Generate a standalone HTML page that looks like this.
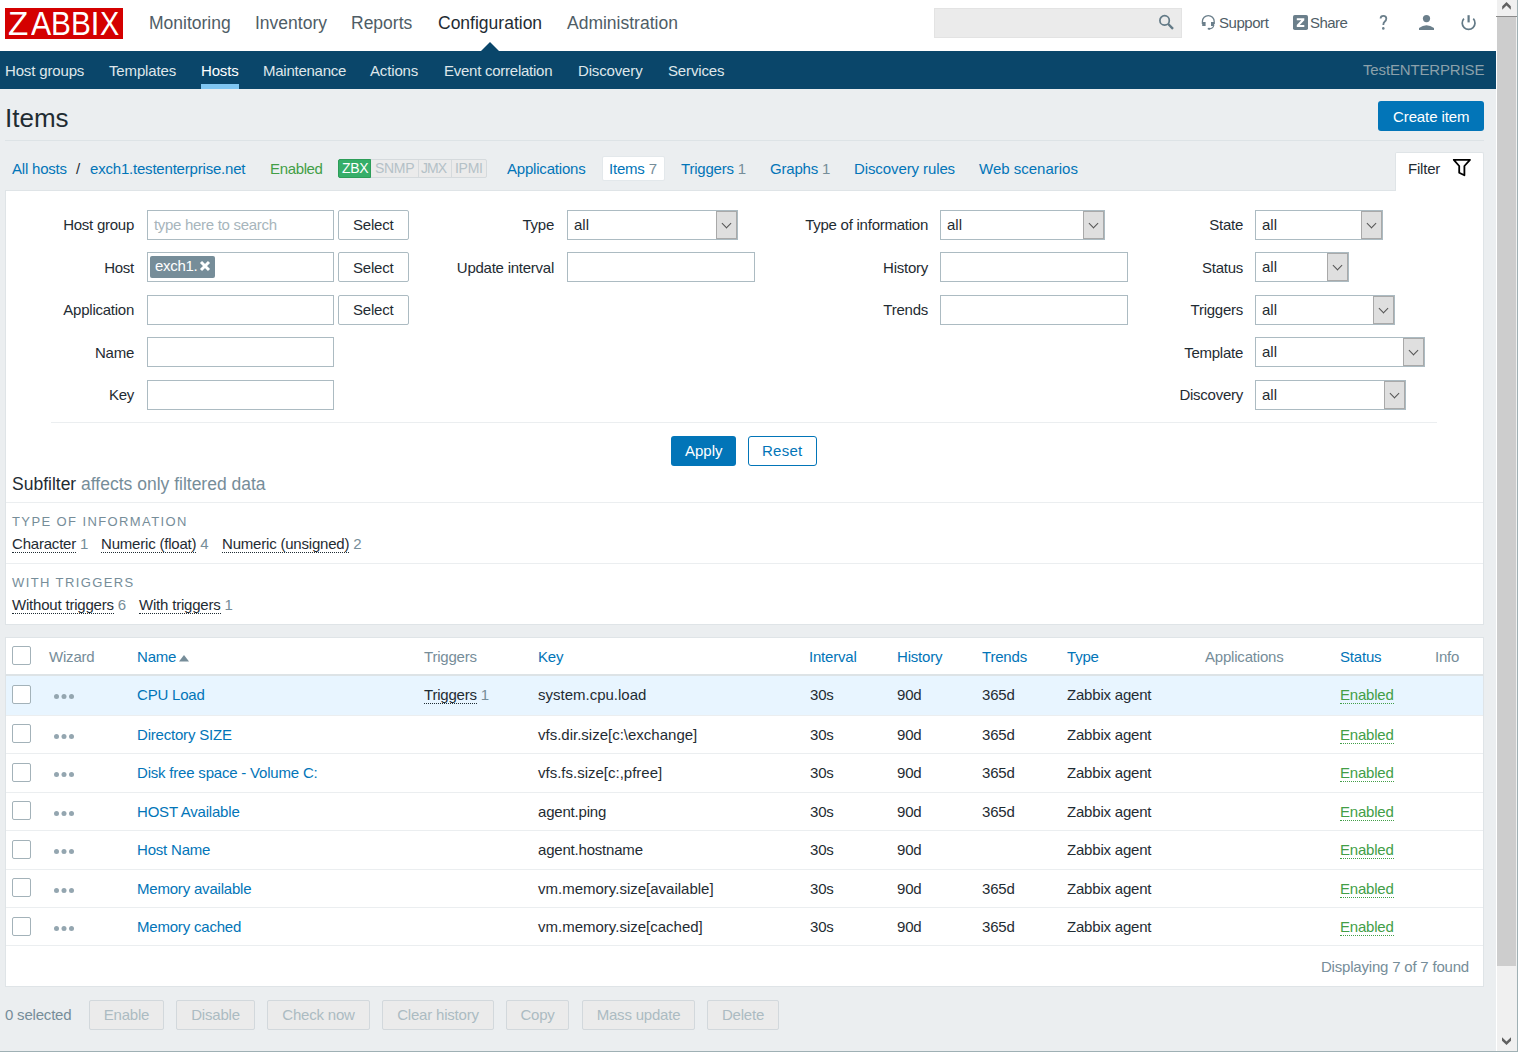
<!DOCTYPE html>
<html><head><meta charset="utf-8">
<style>
*{box-sizing:border-box;margin:0;padding:0}
html,body{width:1527px;height:1058px;overflow:hidden;background:#fff}
body{font-family:"Liberation Sans",sans-serif;color:#1f2c33;position:relative}
.a{position:absolute;white-space:nowrap;line-height:1}
#vp{position:absolute;left:0;top:0;width:1518px;height:1052px;border-right:1px solid #9fb0b4;border-bottom:1px solid #9fb0b4;background:#ebeef0;overflow:hidden}
#hdr{position:absolute;left:0;top:0;width:1496px;height:51px;background:#fff}
#logo{position:absolute;left:5px;top:8px;width:118px;height:31px;background:#d40000}
.mn{font-size:17.5px;color:#4f5d66;top:15px}
#sub{position:absolute;left:0;top:51px;width:1496px;height:38px;background:#0a466a}
.sn{font-size:15px;color:#dfe6ea;top:12px;letter-spacing:-0.15px}
.f15{font-size:15px;letter-spacing:-0.2px}
.lnk{color:#0275b8}
.gr{color:#768d99}
.grn{color:#429e47}
.box{position:absolute;background:#fff;border:1px solid #dfe4e7}
.inp{position:absolute;height:30px;border:1px solid #acbbc2;background:#fff}
.btn{position:absolute;height:30px;border:1px solid #acbbc2;border-radius:2px;background:#fff}
.lbl{font-size:15px;letter-spacing:-0.25px;text-align:right}
.sel{position:absolute;height:30px;border:1px solid #acbbc2;background:#fff}
.sel i{position:absolute;right:0;top:0;width:21px;height:28px;border:1px solid #a9a9a9;background:#dfdfdf}
.sel i:after{content:"";position:absolute;left:6px;top:8px;width:6px;height:6px;border-right:1.3px solid #555;border-bottom:1.3px solid #555;transform:rotate(45deg)}
.sel b{position:absolute;left:6px;top:6px;font-weight:normal;font-size:15px;line-height:1}
.dot{border-bottom:1px dotted currentColor}
.cb{position:absolute;left:12px;width:19px;height:19px;border:1px solid #a3b2b9;border-radius:2px;background:#fff}
.wz{position:absolute;left:53px;width:21px;height:6px}
.wz:before{content:"";position:absolute;left:1px;top:0;width:5px;height:5px;border-radius:50%;background:#94a6b0;box-shadow:7.5px 0 0 #94a6b0,15px 0 0 #94a6b0}
.dbtn{position:absolute;top:1000px;height:30px;border:1px solid #d2d8dc;border-radius:2px;background:#ebebeb;color:#acbbc2;font-size:15px;letter-spacing:-0.2px;text-align:center;line-height:28px}
</style></head><body>
<div id="vp">
 <!-- HEADER -->
 <div id="hdr">
  <div id="logo"></div>
  <div class="a mn" style="left:149px">Monitoring</div>
  <div class="a mn" style="left:255px">Inventory</div>
  <div class="a mn" style="left:351px">Reports</div>
  <div class="a mn" style="left:438px;color:#1f2c33">Configuration</div>
  <div class="a mn" style="left:567px">Administration</div>
  <div class="a" style="left:8.4px;top:8px;color:#fff;font-size:32.6px;transform:scaleX(1.020);transform-origin:0 0">Z</div><div class="a" style="left:30.5px;top:8px;color:#fff;font-size:32.6px;transform:scaleX(0.930);transform-origin:0 0">A</div><div class="a" style="left:51.1px;top:8px;color:#fff;font-size:32.6px;transform:scaleX(0.913);transform-origin:0 0">B</div><div class="a" style="left:71.1px;top:8px;color:#fff;font-size:32.6px;transform:scaleX(0.913);transform-origin:0 0">B</div><div class="a" style="left:90.6px;top:8px;color:#fff;font-size:32.6px;transform:scaleX(1.000);transform-origin:0 0">I</div><div class="a" style="left:100.2px;top:8px;color:#fff;font-size:32.6px;transform:scaleX(0.886);transform-origin:0 0">X</div>
  <svg style="position:absolute;left:481px;top:42px" width="18" height="9"><path d="M0 9 L9 0 L18 9 Z" fill="#0a466a"/></svg>
  <div style="position:absolute;left:934px;top:8px;width:248px;height:30px;background:#ebebeb;border:1px solid #e3e3e3"></div>
  <svg style="position:absolute;left:1155px;top:10px" width="25" height="25"><circle cx="9.6" cy="10.4" r="4.7" fill="none" stroke="#627986" stroke-width="1.7"/><path d="M13.2 14 L18 18.8" stroke="#627986" stroke-width="2.4"/></svg>
  <svg style="position:absolute;left:1198px;top:12px" width="20" height="20"><path d="M4.4 12 L4.4 9.5 A5.9 5.9 0 0 1 16.2 9.5 L16.2 12" fill="none" stroke="#6b7f8b" stroke-width="1.3"/><rect x="4.2" y="10" width="3.4" height="4" fill="#6b7f8b"/><rect x="13" y="10" width="3.2" height="4" fill="#6b7f8b"/><path d="M15.6 13.5 Q15.4 16.6 11 16.8" fill="none" stroke="#6b7f8b" stroke-width="1.2"/><ellipse cx="11" cy="16.8" rx="1.4" ry="1" fill="#6b7f8b"/></svg>
  <div class="a f15" style="left:1219px;top:15px;color:#4f5d66;letter-spacing:-0.45px">Support</div>
  <svg style="position:absolute;left:1293px;top:15px" width="15" height="15"><rect x="0" y="0" width="15" height="15" rx="1.8" fill="#6b7f8b"/><path d="M3.8 3.3 H11.3 V5.2 L6.8 10 H11.3 V12 H3.8 V10.1 L8.3 5.3 H3.8 Z" fill="#fff"/></svg>
  <div class="a f15" style="left:1310px;top:15px;color:#4f5d66;letter-spacing:-0.55px">Share</div>
  <svg style="position:absolute;left:1376px;top:13px" width="14" height="19"><path d="M4.6 5.6 Q4.6 2.8 7.4 2.8 Q10.3 2.8 10.3 5.5 Q10.3 7.3 8.8 8.5 Q7.3 9.7 7.3 12.1" fill="none" stroke="#6b7f8b" stroke-width="1.8"/><circle cx="7.3" cy="15.4" r="1.3" fill="#6b7f8b"/></svg>
  <svg style="position:absolute;left:1418px;top:14px" width="17" height="17"><circle cx="8.5" cy="4.6" r="3.6" fill="#6b7f8b"/><path d="M1 16 L1 14 Q8.5 8.5 16 14 L16 16 Z" fill="#6b7f8b"/></svg>
  <svg style="position:absolute;left:1459px;top:14px" width="19" height="18"><path d="M4.9 4.6 A6.4 6.4 0 1 0 14.3 4.6" fill="none" stroke="#627986" stroke-width="1.7"/><path d="M9.6 1.2 V8.4" stroke="#627986" stroke-width="2.2"/></svg>
 </div>
 <div id="sub">
  <div class="a sn" style="left:5px">Host groups</div>
  <div class="a sn" style="left:109px">Templates</div>
  <div class="a sn" style="left:201px;color:#fff">Hosts</div>
  <div class="a sn" style="left:263px;letter-spacing:-0.25px">Maintenance</div>
  <div class="a sn" style="left:370px">Actions</div>
  <div class="a sn" style="left:444px;letter-spacing:-0.25px">Event correlation</div>
  <div class="a sn" style="left:578px">Discovery</div>
  <div class="a sn" style="left:668px">Services</div>
  <div style="position:absolute;left:201px;top:33px;width:38px;height:5px;background:#80c6f2"></div>
  <div class="a sn" style="left:1363px;top:11px;color:#8ca1ab">TestENTERPRISE</div>
 </div>
 <!-- PAGE -->
  <div class="a" style="left:5px;top:105px;font-size:26px;color:#1f2c33">Items</div>
  <div style="position:absolute;left:1378px;top:101px;width:106px;height:30px;background:#0275b8;border-radius:3px"></div>
  <div class="a f15" style="left:1393px;top:109px;color:#fff;letter-spacing:-0.1px">Create item</div>
  <div style="position:absolute;left:5px;top:140px;width:1479px;height:1px;background:#dde3e6"></div>
  <!-- breadcrumbs -->
  <div class="a f15 lnk" style="left:12px;top:161px">All hosts</div>
  <div class="a f15" style="left:76px;top:161px">/</div>
  <div class="a f15 lnk" style="left:90px;top:161px">exch1.testenterprise.net</div>
  <div class="a f15 grn" style="left:270px;top:161px;letter-spacing:-0.35px">Enabled</div>
  <div style="position:absolute;left:338px;top:159px;width:149px;height:19px;border-radius:2px;background:#ebebeb;border:1px solid #d5dadd"></div>
  <div style="position:absolute;left:338px;top:159px;width:33px;height:19px;border-radius:2px 0 0 2px;background:#36ae69;border:1px solid #2c9d58"></div>
  <div style="position:absolute;left:418px;top:160px;width:1px;height:17px;background:#d5dadd"></div>
  <div style="position:absolute;left:451px;top:160px;width:1px;height:17px;background:#d5dadd"></div>
  <div class="a" style="left:342px;top:161px;font-size:14px;letter-spacing:-0.3px;color:#fff">ZBX</div>
  <div class="a" style="left:375px;top:161px;font-size:14px;letter-spacing:-0.3px;color:#b4c1c7">SNMP</div>
  <div class="a" style="left:421px;top:161px;font-size:14px;letter-spacing:-0.9px;color:#b4c1c7">JMX</div>
  <div class="a" style="left:455px;top:161px;font-size:14px;letter-spacing:-0.3px;color:#b4c1c7">IPMI</div>
  <div class="a f15 lnk" style="left:507px;top:161px">Applications</div>
  <div style="position:absolute;left:602px;top:156px;width:63px;height:25px;background:#fff;border:1px solid #e3e8eb;border-radius:2px"></div>
  <div class="a f15 lnk" style="left:609px;top:161px">Items <span class="gr">7</span></div>
  <div class="a f15 lnk" style="left:681px;top:161px">Triggers <span class="gr">1</span></div>
  <div class="a f15 lnk" style="left:770px;top:161px">Graphs <span class="gr">1</span></div>
  <div class="a f15 lnk" style="left:854px;top:161px;letter-spacing:-0.1px">Discovery rules</div>
  <div class="a f15 lnk" style="left:979px;top:161px;letter-spacing:0">Web scenarios</div>
  <!-- filter tab + box -->
  <div class="box" style="left:5px;top:190px;width:1479px;height:435px"></div>
  <div style="position:absolute;left:1395px;top:152px;width:89px;height:39px;background:#fff;border:1px solid #dfe4e7;border-bottom:none;border-radius:2px 2px 0 0"></div>
  <div style="position:absolute;left:1396px;top:190px;width:87px;height:2px;background:#fff"></div>
  <div class="a f15" style="left:1408px;top:161px">Filter</div>
  <svg style="position:absolute;left:1448px;top:155px" width="28" height="25"><path d="M5.8 4.8 H22 L16.4 11 V20.3 L11.2 17.8 V11 Z" fill="none" stroke="#000" stroke-width="1.8" stroke-linejoin="round"/></svg>
  <div class="a lbl" style="right:1383px;top:217px">Host group</div>
  <div class="inp" style="left:147px;top:210px;width:187px"></div>
  <div class="a lbl" style="right:1383px;top:260px">Host</div>
  <div class="inp" style="left:147px;top:252px;width:187px"></div>
  <div class="a lbl" style="right:1383px;top:302px">Application</div>
  <div class="inp" style="left:147px;top:295px;width:187px"></div>
  <div class="a lbl" style="right:1383px;top:345px">Name</div>
  <div class="inp" style="left:147px;top:337px;width:187px"></div>
  <div class="a lbl" style="right:1383px;top:387px">Key</div>
  <div class="inp" style="left:147px;top:380px;width:187px"></div>
  <div class="btn" style="left:338px;top:210px;width:71px"></div><div class="a f15" style="left:353px;top:217px">Select</div>
  <div class="btn" style="left:338px;top:252px;width:71px"></div><div class="a f15" style="left:353px;top:260px">Select</div>
  <div class="btn" style="left:338px;top:295px;width:71px"></div><div class="a f15" style="left:353px;top:302px">Select</div>
  <div class="a f15" style="left:154px;top:217px;color:#a7b5bc;letter-spacing:-0.3px">type here to search</div>
  <div style="position:absolute;left:150px;top:256px;width:65px;height:22px;background:#768d99;border-radius:2px"></div>
  <div class="a f15" style="left:155px;top:258px;color:#fff;letter-spacing:-0.3px">exch1.</div>
  <svg style="position:absolute;left:199px;top:260px" width="12" height="12"><path d="M2 2 L10 10 M10 2 L2 10" stroke="#fff" stroke-width="3"/></svg>
  <div class="a lbl" style="right:963px;top:217px">Type</div>
  <div class="sel" style="left:567px;top:210px;width:171px"><b>all</b><i></i></div>
  <div class="a lbl" style="right:963px;top:260px">Update interval</div>
  <div class="inp" style="left:567px;top:252px;width:188px"></div>
  <div class="a lbl" style="right:589px;top:217px">Type of information</div>
  <div class="sel" style="left:940px;top:210px;width:165px"><b>all</b><i></i></div>
  <div class="a lbl" style="right:589px;top:260px">History</div>
  <div class="inp" style="left:940px;top:252px;width:188px"></div>
  <div class="a lbl" style="right:589px;top:302px">Trends</div>
  <div class="inp" style="left:940px;top:295px;width:188px"></div>
  <div class="a lbl" style="right:274px;top:217px">State</div>
  <div class="sel" style="left:1255px;top:210px;width:128px"><b>all</b><i></i></div>
  <div class="a lbl" style="right:274px;top:260px">Status</div>
  <div class="sel" style="left:1255px;top:252px;width:94px"><b>all</b><i></i></div>
  <div class="a lbl" style="right:274px;top:302px">Triggers</div>
  <div class="sel" style="left:1255px;top:295px;width:140px"><b>all</b><i></i></div>
  <div class="a lbl" style="right:274px;top:345px">Template</div>
  <div class="sel" style="left:1255px;top:337px;width:170px"><b>all</b><i></i></div>
  <div class="a lbl" style="right:274px;top:387px">Discovery</div>
  <div class="sel" style="left:1255px;top:380px;width:151px"><b>all</b><i></i></div>
  <div style="position:absolute;left:51px;top:422px;width:1386px;height:1px;background:#ebeef0"></div>
  <div style="position:absolute;left:671px;top:436px;width:65px;height:30px;background:#0275b8;border-radius:3px"></div><div class="a f15" style="left:685px;top:443px;color:#fff;letter-spacing:0">Apply</div>
  <div style="position:absolute;left:748px;top:436px;width:69px;height:30px;background:#fff;border:1px solid #0275b8;border-radius:3px"></div><div class="a f15 lnk" style="left:762px;top:443px;letter-spacing:0.25px">Reset</div>
  <!-- subfilter -->
  <div class="a" style="left:12px;top:476px;font-size:17.5px">Subfilter <span class="gr">affects only filtered data</span></div>
  <div style="position:absolute;left:6px;top:502px;width:1477px;height:1px;background:#ebeef0"></div>
  <div class="a gr" style="left:12px;top:515px;font-size:13px;letter-spacing:1.4px">TYPE OF INFORMATION</div>
  <div class="a f15" style="left:12px;top:536px"><span class="dot">Character</span> <span class="gr">1</span></div>
  <div class="a f15" style="left:101px;top:536px"><span class="dot">Numeric (float)</span> <span class="gr">4</span></div>
  <div class="a f15" style="left:222px;top:536px"><span class="dot">Numeric (unsigned)</span> <span class="gr">2</span></div>
  <div style="position:absolute;left:6px;top:563px;width:1477px;height:1px;background:#ebeef0"></div>
  <div class="a gr" style="left:12px;top:576px;font-size:13px;letter-spacing:1.4px">WITH TRIGGERS</div>
  <div class="a f15" style="left:12px;top:597px"><span class="dot">Without triggers</span> <span class="gr">6</span></div>
  <div class="a f15" style="left:139px;top:597px"><span class="dot">With triggers</span> <span class="gr">1</span></div>
  <!-- table -->
  <div class="box" style="left:5px;top:637px;width:1479px;height:350px"></div>
  <div class="cb" style="top:646px"></div>
  <div class="a f15 gr" style="left:49px;top:649px">Wizard</div>
  <div class="a f15 lnk" style="left:137px;top:649px">Name</div>
  <svg style="position:absolute;left:179px;top:655px" width="10" height="7"><path d="M0 6.6 L5 0 L10 6.6 Z" fill="#768d99"/></svg>
  <div class="a f15 gr" style="left:424px;top:649px">Triggers</div>
  <div class="a f15 lnk" style="left:538px;top:649px">Key</div>
  <div class="a f15 lnk" style="left:809px;top:649px">Interval</div>
  <div class="a f15 lnk" style="left:897px;top:649px">History</div>
  <div class="a f15 lnk" style="left:982px;top:649px">Trends</div>
  <div class="a f15 lnk" style="left:1067px;top:649px">Type</div>
  <div class="a f15 gr" style="left:1205px;top:649px">Applications</div>
  <div class="a f15 lnk" style="left:1340px;top:649px">Status</div>
  <div class="a f15 gr" style="left:1435px;top:649px">Info</div>
  <div style="position:absolute;left:6px;top:674px;width:1477px;height:2px;background:#dde3e6"></div>
  <div style="position:absolute;left:6px;top:676px;width:1477px;height:39px;background:#e8f5ff"></div>
  <div class="cb" style="top:685px"></div>
  <div class="wz" style="top:694px"></div>
  <div class="a f15 lnk" style="left:137px;top:687px">CPU Load</div>
  <div class="a f15" style="left:424px;top:687px"><span class="dot">Triggers</span> <span class="gr">1</span></div>
  <div class="a f15" style="left:538px;top:687px;letter-spacing:0">system.cpu.load</div>
  <div class="a f15" style="left:810px;top:687px">30s</div>
  <div class="a f15" style="left:897px;top:687px">90d</div>
  <div class="a f15" style="left:982px;top:687px">365d</div>
  <div class="a f15" style="left:1067px;top:687px">Zabbix agent</div>
  <div class="a f15 grn" style="left:1340px;top:687px"><span class="dot">Enabled</span></div>
  <div style="position:absolute;left:6px;top:715px;width:1477px;height:1px;background:#ebeef0"></div>
  <div class="cb" style="top:724px"></div>
  <div class="wz" style="top:734px"></div>
  <div class="a f15 lnk" style="left:137px;top:727px">Directory SIZE</div>
  <div class="a f15" style="left:538px;top:727px;letter-spacing:0">vfs.dir.size[c:\exchange]</div>
  <div class="a f15" style="left:810px;top:727px">30s</div>
  <div class="a f15" style="left:897px;top:727px">90d</div>
  <div class="a f15" style="left:982px;top:727px">365d</div>
  <div class="a f15" style="left:1067px;top:727px">Zabbix agent</div>
  <div class="a f15 grn" style="left:1340px;top:727px"><span class="dot">Enabled</span></div>
  <div style="position:absolute;left:6px;top:753px;width:1477px;height:1px;background:#ebeef0"></div>
  <div class="cb" style="top:763px"></div>
  <div class="wz" style="top:772px"></div>
  <div class="a f15 lnk" style="left:137px;top:765px">Disk free space - Volume C:</div>
  <div class="a f15" style="left:538px;top:765px;letter-spacing:0">vfs.fs.size[c:,pfree]</div>
  <div class="a f15" style="left:810px;top:765px">30s</div>
  <div class="a f15" style="left:897px;top:765px">90d</div>
  <div class="a f15" style="left:982px;top:765px">365d</div>
  <div class="a f15" style="left:1067px;top:765px">Zabbix agent</div>
  <div class="a f15 grn" style="left:1340px;top:765px"><span class="dot">Enabled</span></div>
  <div style="position:absolute;left:6px;top:792px;width:1477px;height:1px;background:#ebeef0"></div>
  <div class="cb" style="top:801px"></div>
  <div class="wz" style="top:811px"></div>
  <div class="a f15 lnk" style="left:137px;top:804px">HOST Available</div>
  <div class="a f15" style="left:538px;top:804px">agent.ping</div>
  <div class="a f15" style="left:810px;top:804px">30s</div>
  <div class="a f15" style="left:897px;top:804px">90d</div>
  <div class="a f15" style="left:982px;top:804px">365d</div>
  <div class="a f15" style="left:1067px;top:804px">Zabbix agent</div>
  <div class="a f15 grn" style="left:1340px;top:804px"><span class="dot">Enabled</span></div>
  <div style="position:absolute;left:6px;top:830px;width:1477px;height:1px;background:#ebeef0"></div>
  <div class="cb" style="top:840px"></div>
  <div class="wz" style="top:849px"></div>
  <div class="a f15 lnk" style="left:137px;top:842px">Host Name</div>
  <div class="a f15" style="left:538px;top:842px">agent.hostname</div>
  <div class="a f15" style="left:810px;top:842px">30s</div>
  <div class="a f15" style="left:897px;top:842px">90d</div>
  <div class="a f15" style="left:1067px;top:842px">Zabbix agent</div>
  <div class="a f15 grn" style="left:1340px;top:842px"><span class="dot">Enabled</span></div>
  <div style="position:absolute;left:6px;top:869px;width:1477px;height:1px;background:#ebeef0"></div>
  <div class="cb" style="top:878px"></div>
  <div class="wz" style="top:888px"></div>
  <div class="a f15 lnk" style="left:137px;top:881px">Memory available</div>
  <div class="a f15" style="left:538px;top:881px;letter-spacing:0">vm.memory.size[available]</div>
  <div class="a f15" style="left:810px;top:881px">30s</div>
  <div class="a f15" style="left:897px;top:881px">90d</div>
  <div class="a f15" style="left:982px;top:881px">365d</div>
  <div class="a f15" style="left:1067px;top:881px">Zabbix agent</div>
  <div class="a f15 grn" style="left:1340px;top:881px"><span class="dot">Enabled</span></div>
  <div style="position:absolute;left:6px;top:907px;width:1477px;height:1px;background:#ebeef0"></div>
  <div class="cb" style="top:917px"></div>
  <div class="wz" style="top:926px"></div>
  <div class="a f15 lnk" style="left:137px;top:919px">Memory cached</div>
  <div class="a f15" style="left:538px;top:919px;letter-spacing:0">vm.memory.size[cached]</div>
  <div class="a f15" style="left:810px;top:919px">30s</div>
  <div class="a f15" style="left:897px;top:919px">90d</div>
  <div class="a f15" style="left:982px;top:919px">365d</div>
  <div class="a f15" style="left:1067px;top:919px">Zabbix agent</div>
  <div class="a f15 grn" style="left:1340px;top:919px"><span class="dot">Enabled</span></div>
  <div style="position:absolute;left:6px;top:945px;width:1477px;height:1px;background:#ebeef0"></div>
  <div class="a f15 gr" style="right:48px;top:959px">Displaying 7 of 7 found</div>
  <div class="a f15 gr" style="left:5px;top:1007px">0 selected</div>
  <div class="dbtn" style="left:89px;width:75px">Enable</div>
  <div class="dbtn" style="left:176px;width:79px">Disable</div>
  <div class="dbtn" style="left:267px;width:103px">Check now</div>
  <div class="dbtn" style="left:382px;width:112px">Clear history</div>
  <div class="dbtn" style="left:506px;width:63px">Copy</div>
  <div class="dbtn" style="left:582px;width:113px">Mass update</div>
  <div class="dbtn" style="left:707px;width:72px">Delete</div>
  <!-- scrollbar -->
  <div style="position:absolute;left:1496px;top:0;width:21px;height:1051px;background:#f0f0f0;border-left:1px solid #fff"></div>
  <div style="position:absolute;left:1497px;top:17px;width:19px;height:949px;background:#cdcdcd"></div>
  <div style="position:absolute;left:1496px;top:16px;width:21px;height:1px;background:#8c8c8c"></div>
  <svg style="position:absolute;left:1496px;top:0" width="21" height="14"><path d="M10.5 2 L14.8 6.3 L14.8 9.8 L10.5 5.5 L6.2 9.8 L6.2 6.3 Z" fill="#606060"/></svg>
  <svg style="position:absolute;left:1496px;top:1034px" width="21" height="14"><path d="M6 3.2 L10.5 7.5 L15 3.2 L15 6.7 L10.5 11 L6 6.7 Z" fill="#606060"/></svg>
</div>
</body></html>
